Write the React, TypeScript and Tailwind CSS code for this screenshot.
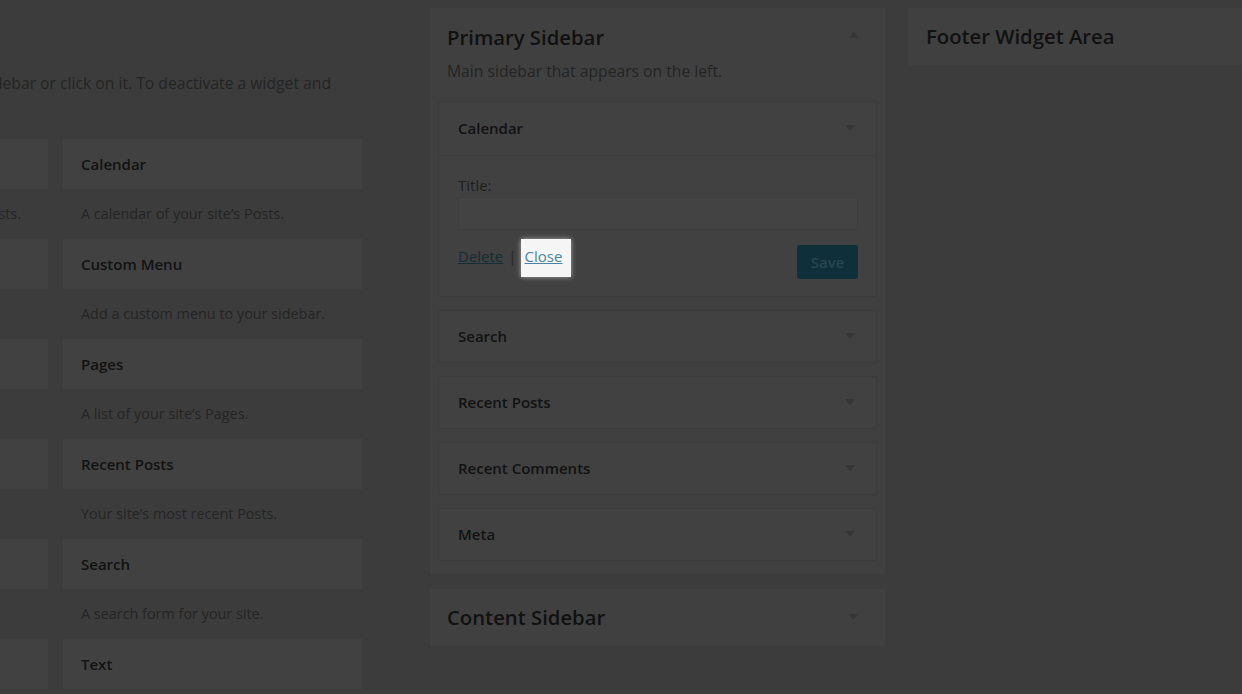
import React from "react";

const font = { fontFamily: '"Open Sans", "Noto Sans", sans-serif' };

type Avail = { name: string; desc: string; leftDesc?: string };

const available: Avail[] = [
  { name: "Calendar", desc: "A calendar of your site\u2019s Posts.", leftDesc: "A monthly archive of your site\u2019s Posts." },
  { name: "Custom Menu", desc: "Add a custom menu to your sidebar." },
  { name: "Pages", desc: "A list of your site\u2019s Pages." },
  { name: "Recent Posts", desc: "Your site\u2019s most recent Posts." },
  { name: "Search", desc: "A search form for your site." },
  { name: "Text", desc: "" },
];

const placed = ["Search", "Recent Posts", "Recent Comments", "Meta"];

function Arrow({ up }: { up?: boolean }) {
  return (
    <svg width="10" height="7" viewBox="0 0 10 7" className="shrink-0">
      {up ? <path d="M0 7 L5 1 L10 7 Z" fill="#363636" /> : <path d="M0 0 L10 0 L5 6 Z" fill="#363636" />}
    </svg>
  );
}

function WidgetRow({ name }: { name: string }) {
  return (
    <div className="h-[53px] flex items-center justify-between pl-[19px] pr-[21px] bg-[#414141] border border-[#3c3c3c]">
      <span className="text-[15px] font-semibold text-[#121212]">{name}</span>
      <Arrow />
    </div>
  );
}

export default function App() {
  return (
    <div className="w-[1242px] h-[694px] overflow-hidden bg-[#3c3c3c] flex" style={font}>
      {/* Available widgets */}
      <div className="w-[362px] shrink-0 flex flex-col">
        <div className="h-[139px] shrink-0 flex flex-col">
          <div className="mt-[72px] w-[331px] flex justify-end">
            <span className="whitespace-nowrap text-[15.7px] leading-[22px] text-[#242424]">
              To activate a widget drag it to a sidebar or click on it. To deactivate a widget and
            </span>
          </div>
        </div>
        <div className="grid grid-cols-[48px_299px] gap-x-[15px] shrink-0">
          {available.map((w) => (
            <React.Fragment key={w.name}>
              <div className="h-[50px] bg-[#414141]" />
              <div className="h-[50px] bg-[#414141] flex items-center px-[18px]">
                <span className="text-[15px] font-semibold text-[#121212]">{w.name}</span>
              </div>
              <div className="h-[50px] flex items-center justify-end pr-[27px]">
                {w.leftDesc && (
                  <span className="whitespace-nowrap text-[14.4px] text-[#242424]">{w.leftDesc}</span>
                )}
              </div>
              <div className="h-[50px] flex items-center px-[18px]">
                <span className="text-[14.4px] text-[#242424]">{w.desc}</span>
              </div>
            </React.Fragment>
          ))}
        </div>
      </div>

      {/* Sidebars */}
      <div className="w-[455px] shrink-0 ml-[68px] pt-[8px] flex flex-col gap-[15px]">
        <div className="bg-[#404040] px-[8px] pb-[13px]">
          <div className="flex items-center justify-between pl-[9px] pr-[18px] pt-[15px]">
            <h2 className="text-[20.3px] leading-[28px] font-semibold text-[#111111]">Primary Sidebar</h2>
            <span className="-mt-[6px]">
              <Arrow up />
            </span>
          </div>
          <p className="pl-[9px] mt-[9px] text-[15.7px] leading-[22px] text-[#242424]">
            Main sidebar that appears on the left.
          </p>
          <div className="mt-[19px] flex flex-col gap-[13px]">
            <div className="bg-[#414141] border border-[#3c3c3c]">
              <div className="h-[54px] flex items-center justify-between pl-[19px] pr-[21px] border-b border-[#3c3c3c]">
                <span className="text-[15px] font-semibold text-[#121212]">Calendar</span>
                <Arrow />
              </div>
              <div className="pl-[19px] pr-[18px] pt-[19px] pb-[17px]">
                <label className="block text-[15px] leading-[20px] text-[#1e1e1e]">Title:</label>
                <div className="mt-[2px] h-[33px] border border-[#3d3d3d] bg-[#434343]" />
                <div className="mt-[9px] flex items-start justify-between">
                  <div className="flex items-start text-[15px] leading-[20px]">
                    <span className="mt-[7px] underline text-[#142c34]">Delete</span>
                    <span className="mt-[7px] ml-[5px] mr-[4px] text-[#262626]">|</span>
                    <span className="bg-[#f5f5f5] pl-[4px] pr-[9px] pt-[7px] pb-[11px] shadow-[0_0_5px_rgba(255,255,255,0.55)]">
                      <span className="underline text-[#4a84a2]">Close</span>
                    </span>
                  </div>
                  <button className="mt-[6px] w-[61px] h-[34px] rounded-[3px] bg-[#0f2f3a] text-[15px] font-semibold text-[#274753]">
                    Save
                  </button>
                </div>
              </div>
            </div>
            {placed.map((p) => (
              <WidgetRow key={p} name={p} />
            ))}
          </div>
        </div>
        <div className="h-[57px] bg-[#404040] flex items-center justify-between pl-[17px] pr-[27px]">
          <h2 className="text-[20.3px] font-semibold text-[#111111]">Content Sidebar</h2>
          <Arrow />
        </div>
      </div>

      {/* Footer area */}
      <div className="flex-1 ml-[23px] pt-[8px]">
        <div className="h-[57px] bg-[#404040] flex items-center pl-[18px]">
          <h2 className="text-[20.3px] font-semibold text-[#111111]">Footer Widget Area</h2>
        </div>
      </div>
    </div>
  );
}
